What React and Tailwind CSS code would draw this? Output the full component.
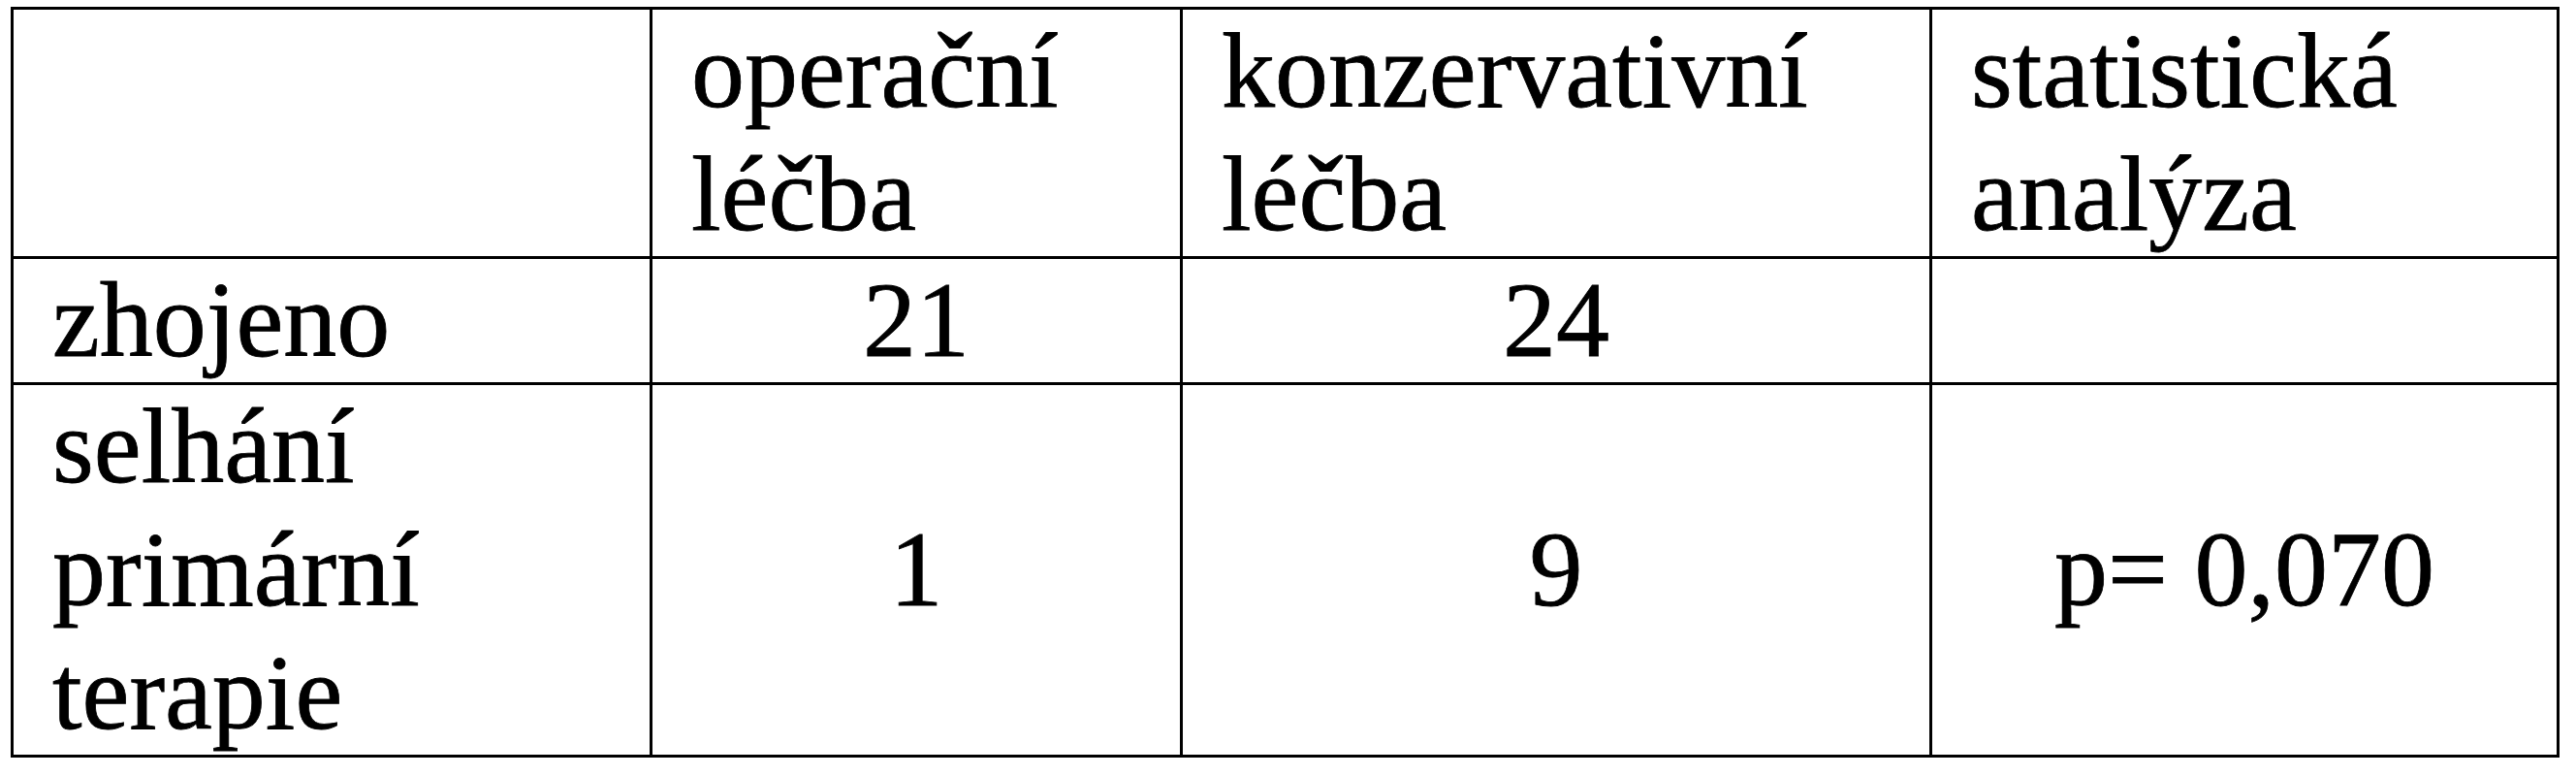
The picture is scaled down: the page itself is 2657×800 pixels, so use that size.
import React from "react";

const rows = [
  { label: ["zhojeno"], op: "21", kons: "24", stat: "" },
  { label: ["selhání", "primární", "terapie"], op: "1", kons: "9", stat: "p= 0,070" },
];

const cell = "border-[3px] border-black px-[40px] py-0";

const App = () => {
  return (
    <div className="bg-white w-[2657px] h-[800px] pt-[7px] pl-[11px] font-[family-name:Liberation_Serif,Times_New_Roman,serif] text-black [-webkit-text-stroke:0.8px_black]">
      <table className="table-fixed border-collapse border-[3px] border-black w-[2626px] text-[110px] leading-[127px]">
        <colgroup>
          <col className="w-[659px]" />
          <col className="w-[547px]" />
          <col className="w-[773px]" />
          <col className="w-[647px]" />
        </colgroup>
        <thead>
          <tr>
            <th className={`${cell} font-normal`}></th>
            <th className={`${cell} font-normal text-left align-top`}>
              operační
              <br />
              léčba
            </th>
            <th className={`${cell} font-normal text-left align-top`}>
              konzervativní
              <br />
              léčba
            </th>
            <th className={`${cell} font-normal text-left align-top`}>
              statistická
              <br />
              analýza
            </th>
          </tr>
        </thead>
        <tbody>
          {rows.map((row, i) => (
            <tr key={i}>
              <td className={`${cell} text-left align-top`}>
                {row.label.map((line, j) => (
                  <div key={j}>{line}</div>
                ))}
              </td>
              <td className={`${cell} text-center align-middle`}>{row.op}</td>
              <td className={`${cell} text-center align-middle`}>{row.kons}</td>
              <td className={`${cell} text-center align-middle`}>{row.stat}</td>
            </tr>
          ))}
        </tbody>
      </table>
    </div>
  );
};

export default App;
